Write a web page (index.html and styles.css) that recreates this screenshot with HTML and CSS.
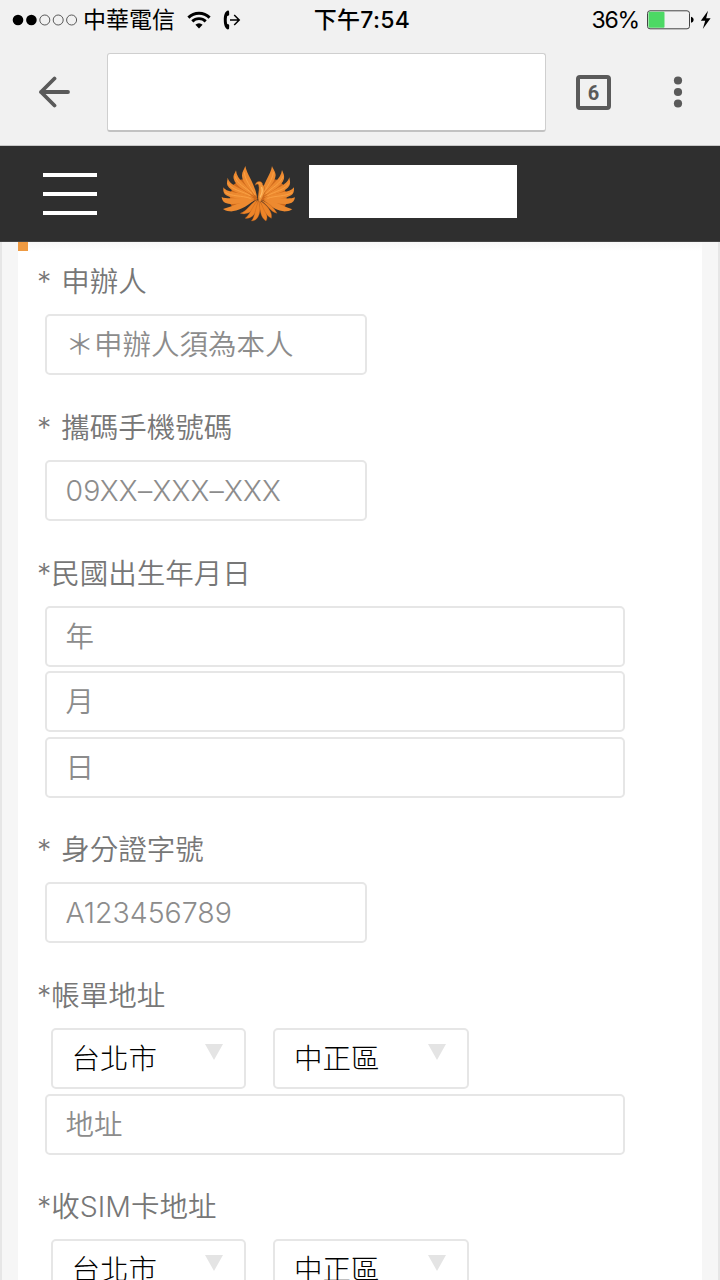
FILE: index.html
```html
<!DOCTYPE html>
<html lang="zh-Hant">
  <head>
    <meta charset="UTF-8" />
    <meta name="viewport" content="width=device-width, initial-scale=1" />
    <title>申辦資料</title>
    <link rel="stylesheet" href="styles.css">
  </head>
  <body>
    <!-- Status bar -->
    <div class="status-bar">
      <div class="status-left">
        <svg class="signal" width="66" height="14" viewBox="0 0 66 14">
          <circle cx="6" cy="7" r="5.3" />
          <circle cx="19.4" cy="7" r="5.3" />
          <g fill="none" stroke="#333" stroke-width="0.8">
            <circle cx="32.8" cy="7" r="5" />
            <circle cx="46.2" cy="7" r="5" />
            <circle cx="59.6" cy="7" r="5" />
          </g>
        </svg>
        <span class="carrier">中華電信</span>
        <svg class="wifi" width="24" height="18" viewBox="0 0 24 18">
          <g fill="none" stroke="#000" stroke-width="2.9">
            <path d="M1.4 6.6a15 15 0 0 1 21.2 0" />
            <path d="M5.3 10.4a9.5 9.5 0 0 1 13.4 0" />
          </g>
          <path d="M12 17.6l-3.6-3.9a5 5 0 0 1 7.2 0z" />
        </svg>
        <svg class="call" width="18" height="20" viewBox="0 0 18 20">
          <path d="M4.800.6C5.600.6 6 1 6.100 1.800L6.200 4.600C6.200 5.300 5.800 5.700 5.200 5.800L4.200 6C3.600 8.500 3.600 11.500 4.200 14L5.200 14.200C5.800 14.300 6.200 14.700 6.200 15.400L6.100 18.200C6 19 5.600 19.400 4.800 19.400 2 18.600.8 14.800.8 10S2 1.400 4.800.6z" />
          <path d="M7 10H16M11.200 5L16.200 10 11.200 15" fill="none" stroke="#000" stroke-width="1.5" />
        </svg>
      </div>
      <div class="clock">下午7:54</div>
      <div class="status-right">
        <span class="percent">36%</span>
        <svg class="battery" width="48" height="20" viewBox="0 0 48 20">
          <rect x="0.5" y="0.8" width="42" height="18" rx="2.5" fill="none" stroke="#444" stroke-width="1" />
          <rect x="1.5" y="1.800" width="16" height="16" rx="1" fill="#4cd964" />
          <path d="M44 6.800c1.800.4 2.600 1.600 2.600 3s-.8 2.600-2.600 3z" />
        </svg>
        <svg width="12" height="20" viewBox="0 0 12 20">
          <path d="M8 .8L.8 10.800h4.400L2.800 19l7.800-10.800H6.200z" />
        </svg>
      </div>
    </div>

    <!-- Browser toolbar -->
    <div class="toolbar">
      <svg class="back" width="32" height="32" viewBox="0 0 32 32" fill="none" stroke="#5a5a5a" stroke-width="3.8" stroke-linecap="round" stroke-linejoin="round">
        <path d="M30 16H3M16.500 2.500L3 16 16.500 29.500" />
      </svg>
      <div class="url-box"></div>
      <div class="tab-count">6</div>
      <svg class="more" width="10" height="32" viewBox="0 0 10 32" fill="#5a5a5a">
        <circle cx="5" cy="4.500" r="4.100" />
        <circle cx="5" cy="16" r="4.100" />
        <circle cx="5" cy="27.500" r="4.100" />
      </svg>
    </div>

    <!-- Site navbar -->
    <nav class="navbar">
      <div class="navbar-toggle"><i></i><i></i><i></i></div>
      <svg class="logo" width="74" height="57" viewBox="60 45 222 171">
        <!-- wings -->
        <g fill="#ed8a30">
          <path d="M170 148L146 88 126 88 112 90 104 100 92 108 92 122 84 132 88 146 84 156 92 168 104 176 128 166z" fill="#cf6a1c" />
          <path d="M178 148L200 88 218 88 234 90 241 100 252 108 252 122 260 132 256 146 260 156 252 168 240 176 220 166z" fill="#cf6a1c" />
          <path d="M133 48C138 76 162 100 168 142 152 124 122 98 123 76 123 64 130 58 133 48z" />
          <path d="M105 61C107 92 140 105 160 138 134 124 104 108 98 86 96 74 102 70 105 61z" />
          <path d="M80 83C87 110 125 112 158 142 126 134 88 126 79 106 76 96 80 91 80 83z" />
          <path d="M67 112C80 132 122 124 160 146 124 148 84 146 71 132 66 126 67 119 67 112z" />
          <path d="M62 141C82 151 124 138 160 149 124 162 88 166 72 158 64 154 63 147 62 141z" />
          <path d="M66 177C90 172 118 154 160 151 134 172 106 186 86 184 76 184 71 180 66 177z" />
          <path d="M213 48C209 76 186 98 179 140 194 124 223 98 224 76 224 64 216 58 213 48z" />
          <path d="M243 60C240 90 206 104 186 138 212 124 243 108 249 86 251 74 246 69 243 60z" />
          <path d="M265 82C258 109 222 112 188 142 220 134 256 126 266 105 269 96 266 90 265 82z" />
          <path d="M279 112C266 131 224 124 188 146 224 148 262 146 275 132 280 125 279 119 279 112z" />
          <path d="M282 142C262 151 222 138 188 149 222 162 256 166 272 158 280 154 281 147 282 142z" />
          <path d="M274 178C252 172 230 154 188 151 210 172 234 186 256 184 266 184 270 180 274 178z" />
        </g>
        <!-- tail -->
        <g fill="#ed8428" stroke="#b85d1a" stroke-width="1">
          <path d="M118 190C138 184 145 164 168 149 164 176 146 198 118 190z" />
          <path d="M132 205C148 195 152 170 171 150 173 180 158 208 132 205z" />
          <path d="M151 213C162 201 163 173 173 151 184 183 172 214 151 213z" />
          <path d="M195 213C176 202 178 176 173 151 194 175 204 202 195 213z" />
          <path d="M211 205C190 195 188 171 175 151 199 165 216 189 211 205z" />
          <path d="M228 190C206 184 201 164 177 149 203 156 221 175 228 190z" />
        </g>
        <!-- head and body -->
        <path d="M163 106C163 92 184 90 185 104 197 116 190 134 177 158 164 142 178 128 173 105 170 100 167 101 163 106z" fill="#f09438" stroke="#b85d1a" stroke-width="1.500" />
        <path d="M182 113C187 124 181 133 178 141" fill="none" stroke="#ffbd66" stroke-width="4" stroke-linecap="round" />
        <g fill="none" stroke="#fba548" stroke-width="2.500" stroke-linecap="round">
          <path d="M130 68C132 90 150 112 162 134M103 80C108 102 134 112 152 130M82 101C92 120 126 124 148 137M74 128C92 140 122 136 148 145" />
          <path d="M217 68C214 90 198 112 184 134M245 80C240 102 212 112 196 130M263 101C254 119 220 124 200 137M273 128C254 140 224 136 200 145" />
        </g>
      </svg>
      <div class="brand-box"></div>
    </nav>

    <main>
      <div class="form-wrapper">
        <div class="title-mark"></div>
        <form>
          <div class="form-group">
            <label>* 申辦人</label>
            <input class="short" type="text" placeholder="＊申辦人須為本人" />
          </div>
          <div class="form-group">
            <label>* 攜碼手機號碼</label>
            <input class="short phone" type="text" placeholder="09XX–XXX–XXX" />
          </div>
          <div class="form-group">
            <label>*民國出生年月日</label>
            <input type="text" placeholder="年" />
            <input type="text" placeholder="月" />
            <input type="text" placeholder="日" />
          </div>
          <div class="form-group">
            <label>* 身分證字號</label>
            <input class="short" type="text" placeholder="A123456789" />
          </div>
          <div class="form-group">
            <label>*帳單地址</label>
            <div class="select-row">
              <div class="select-box"><select><option>台北市</option></select></div>
              <div class="select-box"><select><option>中正區</option></select></div>
            </div>
            <input type="text" placeholder="地址" />
          </div>
          <div class="form-group">
            <label>*收SIM卡地址</label>
            <div class="select-row">
              <div class="select-box"><select><option>台北市</option></select></div>
              <div class="select-box"><select><option>中正區</option></select></div>
            </div>
          </div>
        </form>
      </div>
    </main>
  </body>
</html>
```
FILE: styles.css
```css
* {
  box-sizing: border-box;
}
body {
  margin: 0;
  height: 1280px;
  overflow: hidden;
  display: flex;
  flex-direction: column;
  font-family: Inter, "Noto Sans CJK TC", sans-serif;
  background: #f6f6f6;
}
svg {
  display: block;
  flex: none;
}

/* Status bar */
.status-bar {
  flex: none;
  height: 40px;
  padding: 0 8px 0 12px;
  display: grid;
  grid-template-columns: 1fr auto 1fr;
  align-items: center;
  background: #f1f1f1;
  color: #000;
  font-size: 23px;
  line-height: 40px;
}
.status-left,
.status-right {
  display: flex;
  align-items: center;
}
.status-right {
  justify-content: flex-end;
}
.carrier {
  margin: 0 12px 0 5px;
}
.call {
  margin-left: 12px;
}
.clock {
  font-weight: 500;
  letter-spacing: 0.3px;
}
.percent {
  letter-spacing: -1.2px;
}
.battery {
  margin: 0 5px 0 8px;
}

/* Browser toolbar */
.toolbar {
  flex: none;
  height: 106px;
  padding: 0 37px 1px 38px;
  display: flex;
  align-items: center;
  background: #f1f1f1;
  border-bottom: 1px solid #c8c8c8;
}
.url-box {
  width: 439px;
  height: 79px;
  margin-left: 37px;
  background: #fff;
  border: 1px solid #cfcfcf;
  border-bottom: 2px solid #c2c2c2;
  border-radius: 3px;
}
.tab-count {
  width: 35px;
  height: 35px;
  margin-left: 30px;
  border: 4px solid #5a5a5a;
  border-radius: 4px;
  color: #5a5a5a;
  font: bold 20px/28px Roboto, sans-serif;
  text-align: center;
}
.more {
  margin-left: auto;
}

/* Navbar */
.navbar {
  flex: none;
  height: 96px;
  padding-left: 43px;
  display: flex;
  align-items: center;
  background: #2f2f2f;
  border-bottom: 1px solid #444;
}
.navbar-toggle {
  width: 54px;
  display: grid;
  gap: 15px;
}
.navbar-toggle i {
  height: 4px;
  background: #fff;
}
.logo {
  margin-left: 124px;
}
.brand-box {
  width: 208px;
  height: 53px;
  margin: 0 0 4px 14px;
  background: #fff;
}

/* Form */
main {
  flex: 1;
  min-height: 0;
  padding: 0 16px;
  border: solid #e6e6e6;
  border-width: 0 2px;
}
.form-wrapper {
  background: linear-gradient(#f8f8f8, #fff 9px);
}
.title-mark {
  width: 10px;
  height: 9px;
  background: #ee9a42;
}
form {
  padding: 10px 0 0 19px;
}
.form-group {
  display: flex;
  flex-direction: column;
  gap: 4.5px;
  margin-bottom: 31.8px;
}
label {
  height: 41px;
  margin-bottom: 7.5px;
  color: #777;
  font-size: 28.5px;
  font-weight: 350;
  line-height: 41px;
  word-spacing: 2px;
}
input,
select {
  height: 61px;
  padding: 0 19px;
  border: 2px solid #e6e6e6;
  border-radius: 5px;
  background: #fff;
  font: 350 28.5px/41px Inter, "Noto Sans CJK TC", sans-serif;
}
input {
  width: 580px;
  margin: 0 0 0 7.5px;
}
input.short {
  width: 322px;
}
input::placeholder {
  color: #8c8c8c;
}
.phone {
  letter-spacing: 0.2px;
}
.select-row {
  display: flex;
  gap: 27px;
  padding-left: 13.5px;
}
.select-box {
  display: grid;
  width: 195.5px;
}
.select-box::after {
  content: "";
  grid-area: 1 / 1;
  justify-self: end;
  margin: 16px 23px 0 0;
  border: 9px solid transparent;
  border-top: 16px solid #e4e4e4;
  border-bottom: 0;
  align-self: start;
}
select {
  grid-area: 1 / 1;
  width: 100%;
  margin: 0;
  color: #000;
  font-weight: 300;
  appearance: none;
}
```
